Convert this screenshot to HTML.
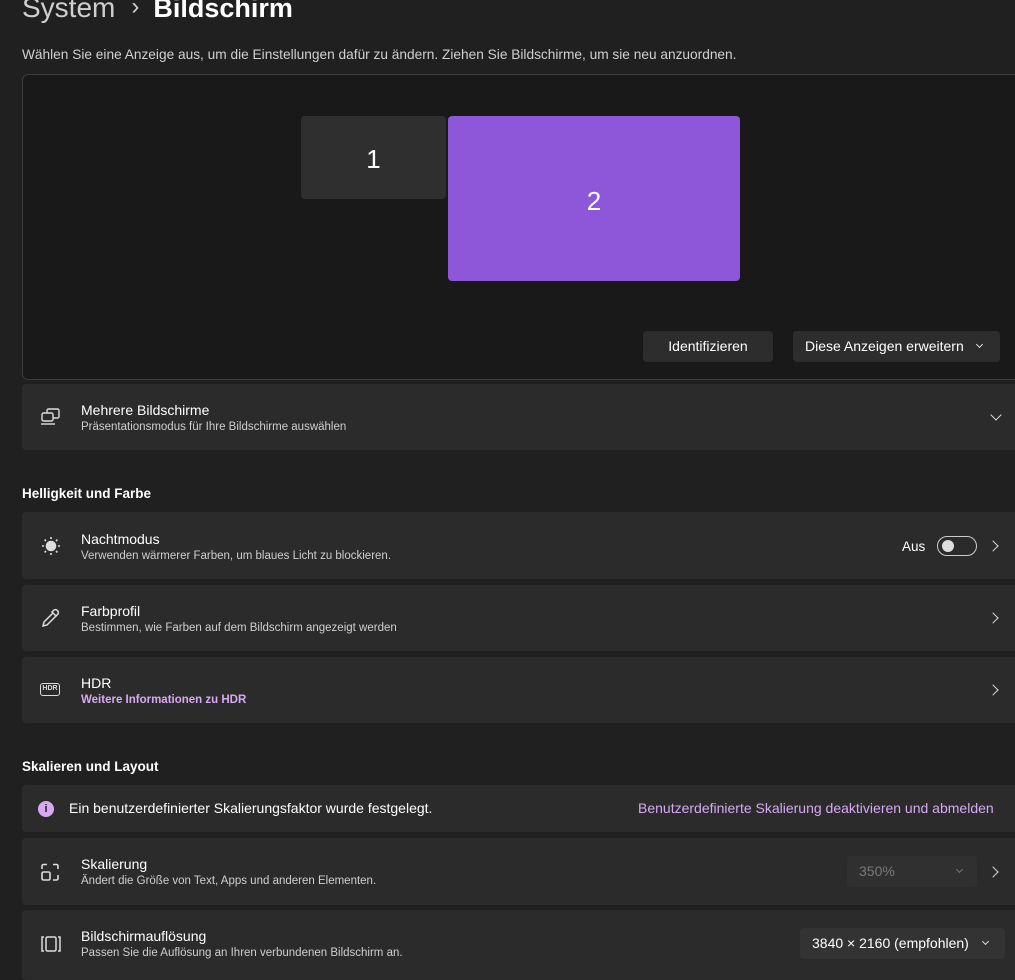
<!DOCTYPE html>
<html><head><meta charset="utf-8"><style>
*{margin:0;padding:0;box-sizing:border-box}
html,body{width:1015px;height:975px;overflow:hidden;background:#202020;font-family:"Segoe UI","Liberation Sans",sans-serif;color:#fff}
.abs{position:absolute}
.card{position:absolute;left:22px;width:1010px;background:#2b2b2b;border-radius:4px}
.t{position:absolute;left:59px;font-size:14px;color:#fff}
.s{position:absolute;left:59px;font-size:11.5px;color:#cfcfcf}
.chev{position:absolute;width:8px;height:8px;border-right:1.5px solid #ddd;border-top:1.5px solid #ddd;transform:rotate(45deg)}
.ico{position:absolute;left:18px}
.h{position:absolute;left:22px;font-size:13.5px;font-weight:bold}
.btn{position:absolute;background:#2d2d2d;border-radius:4px;font-size:14px;color:#fff;height:31px;line-height:31px}
</style></head><body>
<div class="abs" style="left:22px;top:-8px;font-size:28px;white-space:nowrap"><span style="color:#cfcfcf">System</span><span style="color:#cfcfcf;font-size:24px;margin:0 14px 0 16px;position:relative;top:-3px">›</span><span style="font-weight:600;font-size:27px">Bildschirm</span></div>
<div class="abs" style="left:22px;top:47px;font-size:13.7px;color:#d0d0d0">Wählen Sie eine Anzeige aus, um die Einstellungen dafür zu ändern. Ziehen Sie Bildschirme, um sie neu anzuordnen.</div>
<div class="abs" style="left:22px;top:74px;width:1010px;height:306px;background:#191919;border:1px solid #3c3c3c;border-radius:6px"></div>
<div class="abs" style="left:301px;top:116px;width:145px;height:83px;background:#2f2f2f;border-radius:4px;text-align:center;line-height:86px;font-size:26px">1</div>
<div class="abs" style="left:448px;top:116px;width:292px;height:165px;background:#8e57da;border-radius:4px;text-align:center;line-height:170px;font-size:26px">2</div>
<div class="btn" style="left:643px;top:331px;width:130px;text-align:center">Identifizieren</div>
<div class="btn" style="left:793px;top:331px;width:207px;padding-left:12px">Diese Anzeigen erweitern<span class="chev" style="left:184px;top:11px;width:5px;height:5px;transform:rotate(135deg);border-width:1px"></span></div>

<div class="card" style="top:384px;height:66px">
<svg class="ico" style="top:23px" width="22" height="20" viewBox="0 0 22 20" fill="none" stroke="#ddd" stroke-width="1.4"><rect x="7" y="2" width="12" height="9" rx="1.5"/><rect x="2" y="6" width="11" height="8" rx="1.5" fill="#2b2b2b"/><line x1="1" y1="17" x2="15" y2="17"/></svg>
<div class="t" style="top:18px">Mehrere Bildschirme</div><div class="s" style="top:37px">Präsentationsmodus für Ihre Bildschirme auswählen</div>
<span class="chev" style="left:970px;top:27px;transform:rotate(135deg)"></span></div>

<div class="h" style="top:486px">Helligkeit und Farbe</div>
<div class="card" style="top:512px;height:67px">
<svg class="ico" style="top:23px" width="22" height="22" viewBox="0 0 22 22" fill="none" stroke="#ddd" stroke-width="1.6"><circle cx="11" cy="11" r="4.5" fill="#ddd"/><path d="M11 2v2M11 18v2M2 11h2M18 11h2M4.6 4.6l1.4 1.4M16 16l1.4 1.4M4.6 17.4L6 16M16 6l1.4-1.4"/></svg>
<div class="t" style="top:19px">Nachtmodus</div><div class="s" style="top:38px">Verwenden wärmerer Farben, um blaues Licht zu blockieren.</div>
<div class="abs" style="left:880px;top:27px;font-size:13.5px">Aus</div>
<div class="abs" style="left:915px;top:24px;width:40px;height:20px;border:1px solid #ccc;border-radius:10px"><div class="abs" style="left:4px;top:3px;width:12px;height:12px;border-radius:50%;background:#ddd"></div></div>
<span class="chev" style="left:967px;top:30px"></span></div>
<div class="card" style="top:585px;height:66px">
<svg class="ico" style="top:22px" width="22" height="22" viewBox="0 0 22 22" fill="none" stroke="#ddd" stroke-width="1.5"><path d="M14 3a3 3 0 014 4l-2 2-4-4z"/><path d="M13 6l-9 9-1 4 4-1 9-9"/></svg>
<div class="t" style="top:18px">Farbprofil</div><div class="s" style="top:37px">Bestimmen, wie Farben auf dem Bildschirm angezeigt werden</div>
<span class="chev" style="left:967px;top:29px"></span></div>
<div class="card" style="top:657px;height:66px">
<div class="ico abs" style="top:26px;width:20px;height:13px;border:1.5px solid #ddd;border-radius:3px;font-size:7px;font-weight:bold;text-align:center;line-height:10px;color:#ddd">HDR</div>
<div class="t" style="top:18px">HDR</div><div class="s" style="top:37px;color:#d8a8f2;font-weight:bold">Weitere Informationen zu HDR</div>
<span class="chev" style="left:967px;top:29px"></span></div>

<div class="h" style="top:759px">Skalieren und Layout</div>
<div class="card" style="top:785px;height:47px">
<div class="abs" style="left:16px;top:16px;width:16px;height:16px;border-radius:50%;background:#d8a8f2;color:#202020;font-size:11px;font-weight:bold;text-align:center;line-height:16px">i</div>
<div class="abs" style="left:47px;top:15px;font-size:14px">Ein benutzerdefinierter Skalierungsfaktor wurde festgelegt.</div>
<div class="abs" style="left:616px;top:15px;font-size:14px;color:#d8a8f2">Benutzerdefinierte Skalierung deaktivieren und abmelden</div></div>
<div class="card" style="top:838px;height:67px">
<svg class="ico" style="top:24px" width="20" height="20" viewBox="0 0 20 20" fill="none" stroke="#ddd" stroke-width="1.6"><path d="M2 7V4a1.5 1.5 0 011.5-1.5H7M13 2.5h3.5A1.5 1.5 0 0118 4v3M18 13v3.5a1.5 1.5 0 01-1.5 1.5H13"/><rect x="2" y="10" width="8" height="8" rx="1.5"/></svg>
<div class="t" style="top:18px">Skalierung</div><div class="s" style="top:37px">Ändert die Größe von Text, Apps und anderen Elementen.</div>
<div class="btn" style="left:825px;top:18px;width:130px;background:#303030;color:#7a7a7a;padding-left:12px">350%<span class="chev" style="left:110px;top:11px;width:5px;height:5px;transform:rotate(135deg);border-color:#777;border-width:1px"></span></div>
<span class="chev" style="left:967px;top:30px"></span></div>
<div class="card" style="top:910px;height:70px">
<svg class="ico" style="top:24px" width="22" height="20" viewBox="0 0 22 20" fill="none" stroke="#ddd" stroke-width="1.5"><path d="M4 3H2v14h2M18 3h2v14h-2"/><rect x="6" y="3" width="10" height="14" rx="1.5"/></svg>
<div class="t" style="top:18px">Bildschirmauflösung</div><div class="s" style="top:37px">Passen Sie die Auflösung an Ihren verbundenen Bildschirm an.</div>
<div class="btn" style="left:778px;top:18px;width:205px;background:#333;padding-left:12px">3840 × 2160 (empfohlen)<span class="chev" style="left:183px;top:11px;width:5px;height:5px;transform:rotate(135deg);border-width:1px"></span></div></div>
</body></html>
